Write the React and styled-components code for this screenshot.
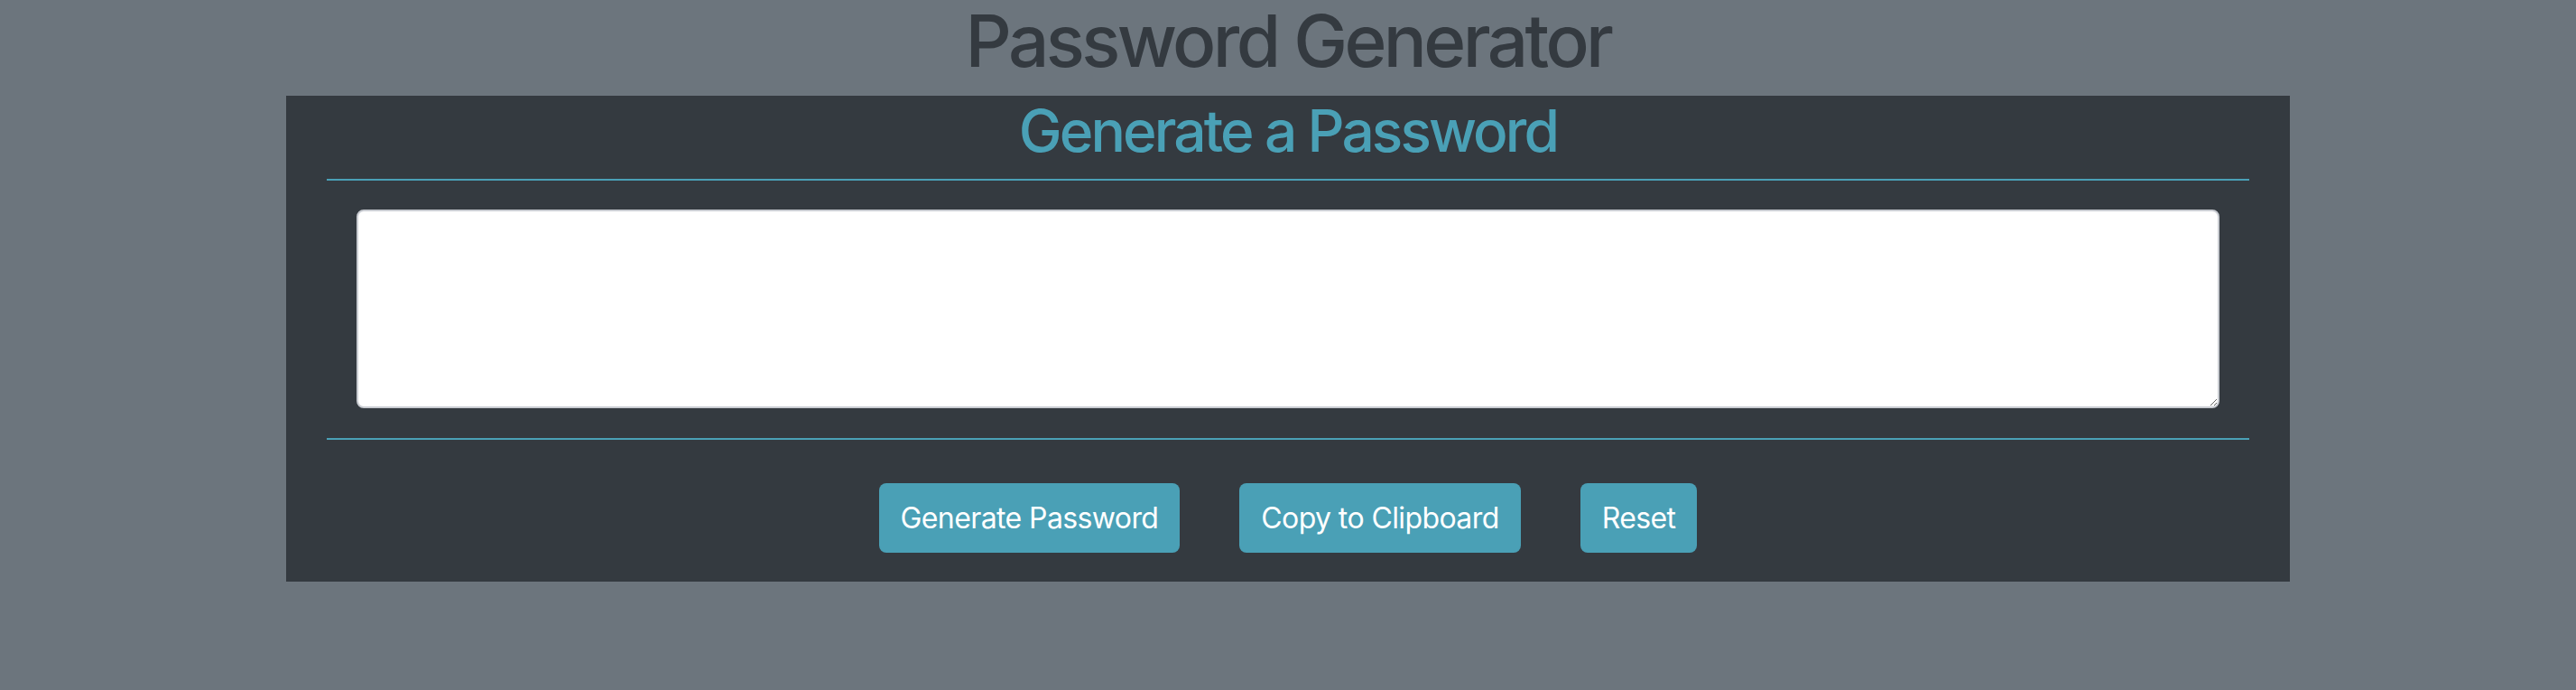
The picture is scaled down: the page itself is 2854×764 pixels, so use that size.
import React from 'react';
import styled, { createGlobalStyle } from 'styled-components';

const GlobalStyle = createGlobalStyle`
    html, body {
        margin: 0;
        padding: 0;
        background: #6c757d;
    }
    body {
        font-family: Inter, "Noto Sans", "Liberation Sans", sans-serif;
        -webkit-font-smoothing: antialiased;
    }
    * {
        box-sizing: border-box;
    }
`;

const Page = styled.div`
    min-height: 764px;
    background: #6c757d;
    display: flex;
    flex-direction: column;
    align-items: center;
`;

const Title = styled.h1`
    margin: 0 0 16px;
    font-size: 80px;
    line-height: 90px;
    font-weight: 500;
    color: #343a40;
    text-align: center;
    letter-spacing: -3.6px;
`;

const Card = styled.div`
    width: 2220px;
    background: #343a40;
    padding: 0 45px 32px;
    display: flex;
    flex-direction: column;
`;

const CardTitle = styled.h2`
    margin: 0 0 15px;
    font-size: 64px;
    line-height: 77px;
    font-weight: 500;
    color: #4aa0b6;
    text-align: center;
    letter-spacing: -2.9px;
`;

const Divider = styled.hr`
    margin: 0;
    border: 0;
    border-top: 2px solid #4aa0b6;
`;

const TextWrap = styled.div`
    padding: 32px 33px 33px;
    display: flex;
`;

const Output = styled.textarea`
    width: 100%;
    height: 220px;
    border: 2px solid #c9ccd2;
    border-radius: 8px;
    background: #fff;
    font-family: inherit;
    font-size: 32px;
    padding: 12px 24px;
    outline: none;
`;

const ButtonRow = styled.div`
    margin-top: 48px;
    display: flex;
    justify-content: center;
    gap: 66px;
`;

const Button = styled.button`
    height: 77px;
    padding: 0 24px;
    border: 0;
    border-radius: 8px;
    background: #4aa0b6;
    color: #fff;
    font-family: inherit;
    font-size: 32px;
    font-weight: 400;
    cursor: pointer;
    letter-spacing: -0.6px;
`;

export default function App() {
    return (
        <Page>
            <GlobalStyle />
            <Title>Password Generator</Title>
            <Card>
                <CardTitle>Generate a Password</CardTitle>
                <Divider />
                <TextWrap>
                    <Output readOnly />
                </TextWrap>
                <Divider />
                <ButtonRow>
                    <Button>Generate Password</Button>
                    <Button>Copy to Clipboard</Button>
                    <Button>Reset</Button>
                </ButtonRow>
            </Card>
        </Page>
    );
}
